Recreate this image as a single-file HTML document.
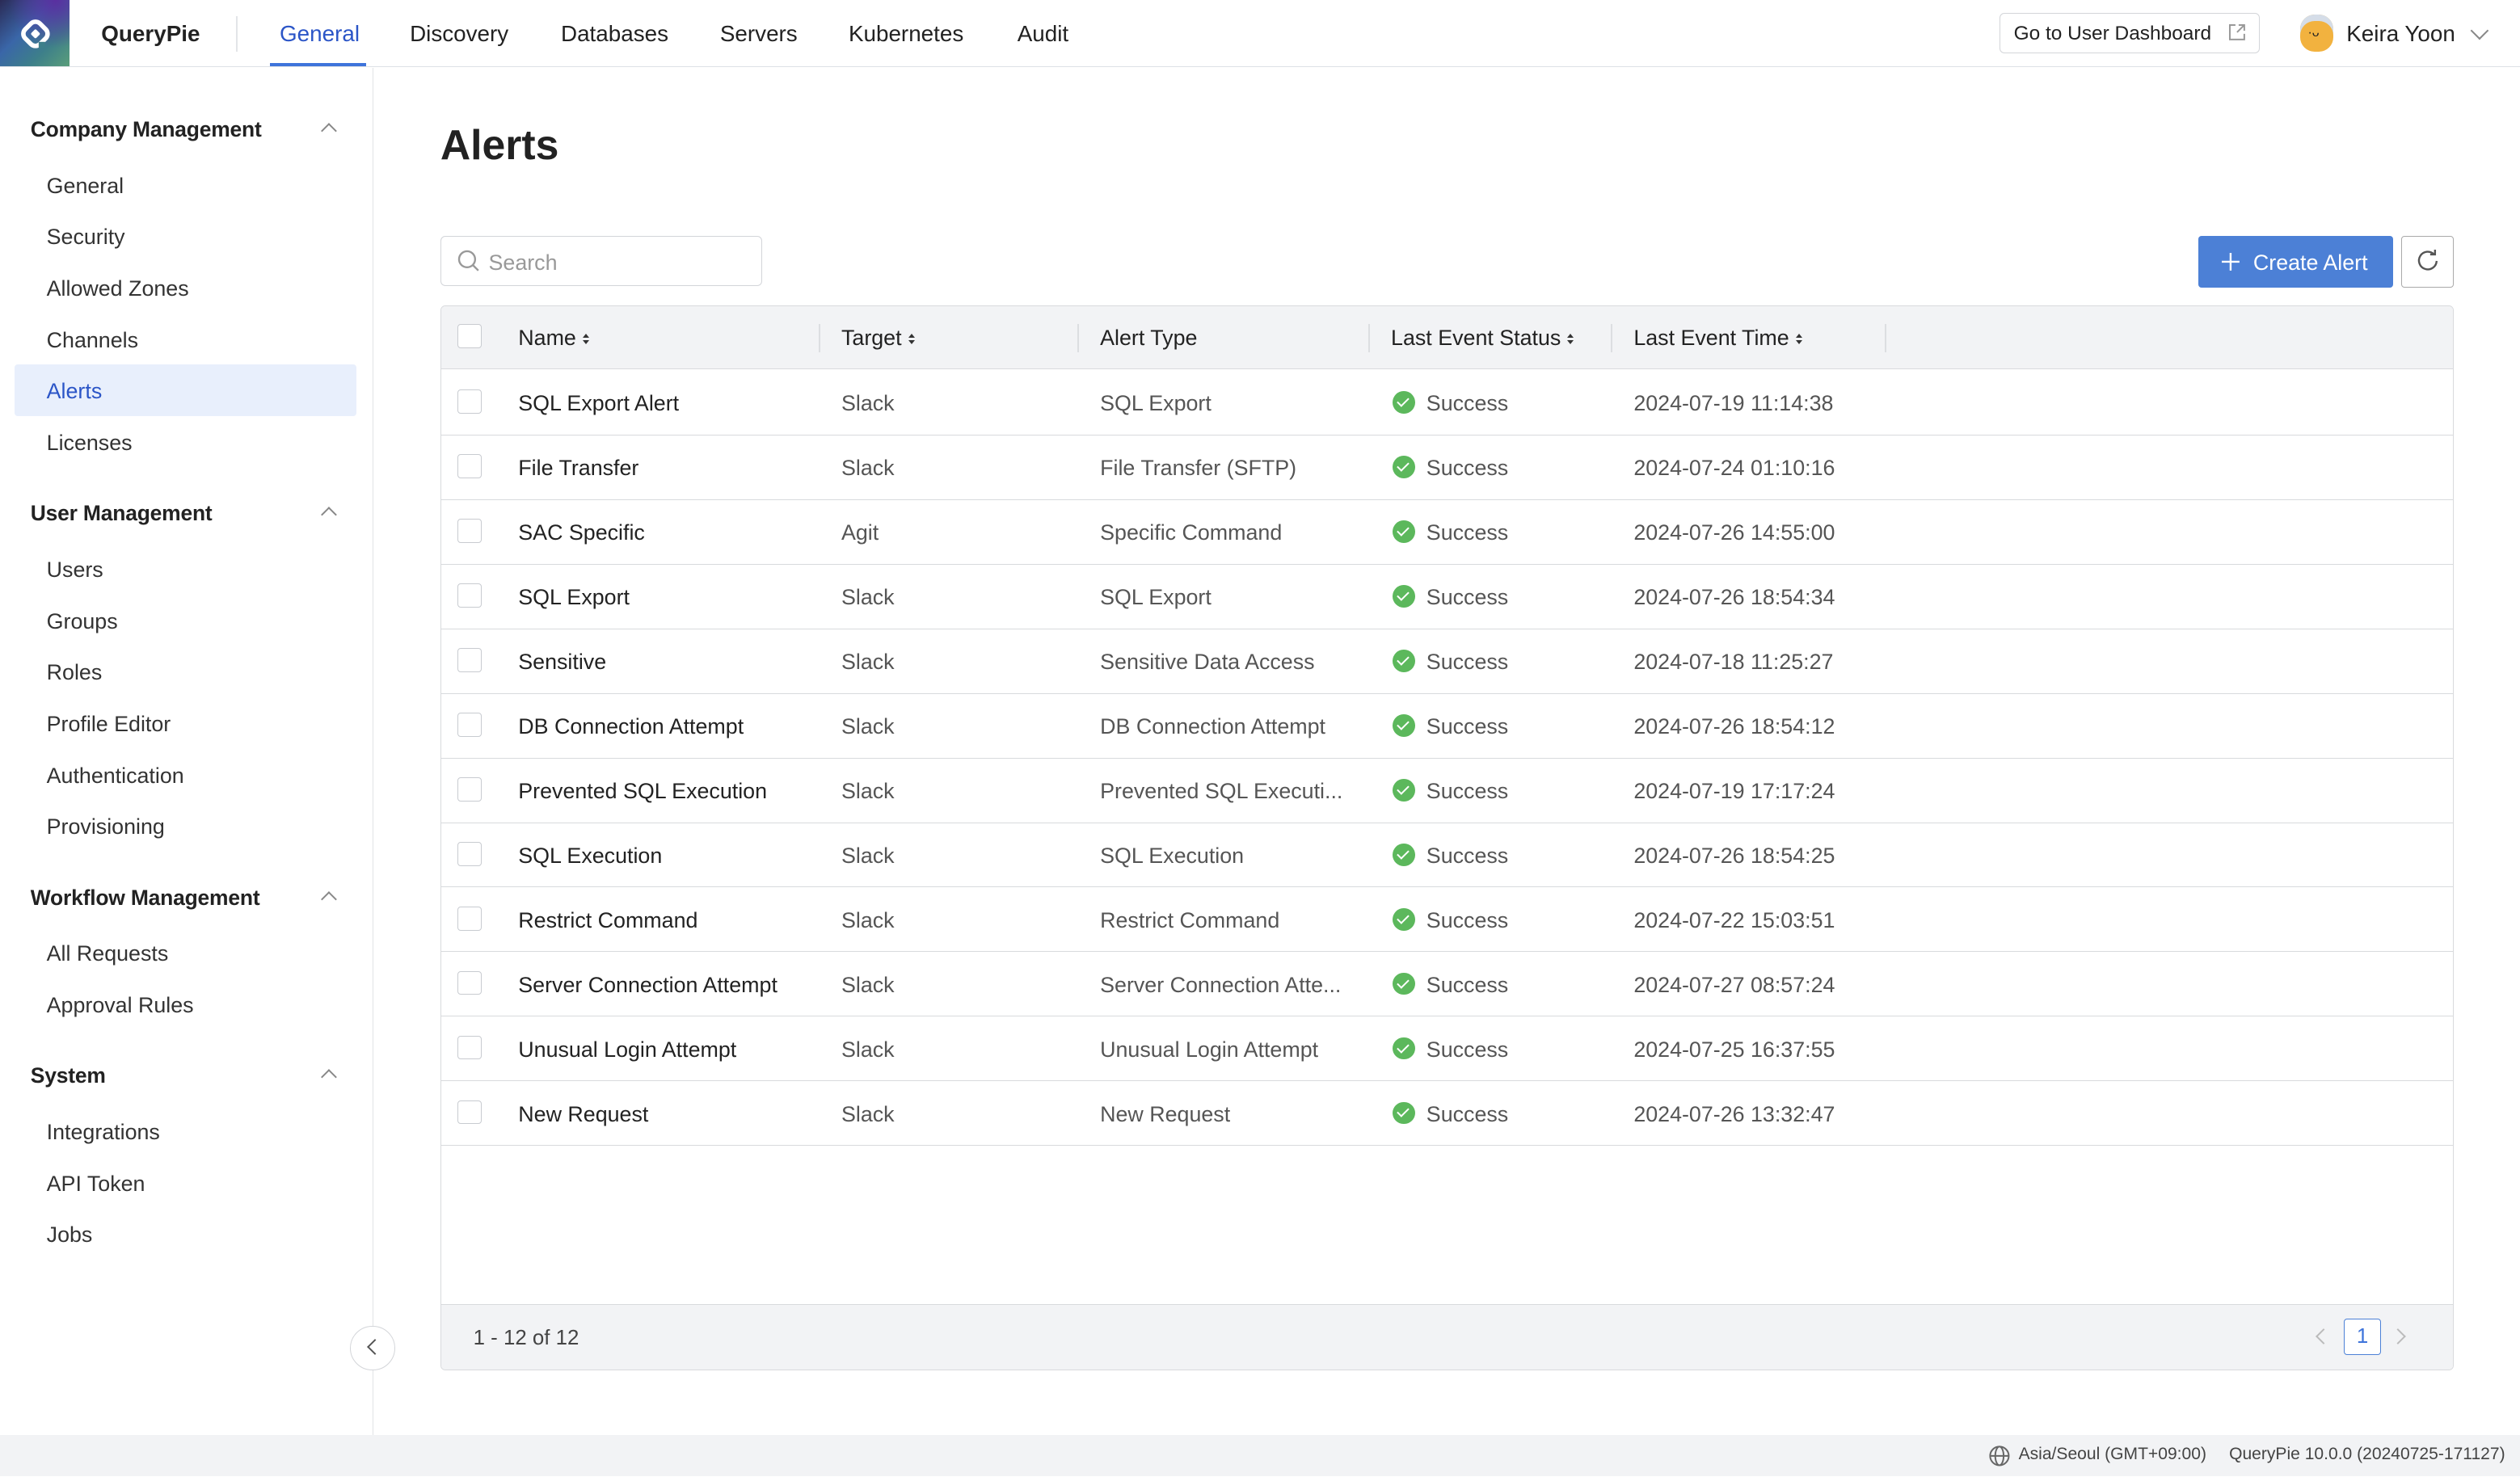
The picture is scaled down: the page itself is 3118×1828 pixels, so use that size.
<!DOCTYPE html>
<html><head><meta charset="utf-8">
<style>
html{zoom:1.98852}
body{margin:0;width:1568px;height:919px;position:relative;overflow:hidden;font-family:"Liberation Sans",sans-serif;color:#222;background:#fff}
.a{position:absolute;white-space:nowrap}
.hdr{position:absolute;left:0;top:0;width:1568px;height:41px;border-bottom:1px solid #dde1e6;background:#fff}
.nav{top:13px;font-size:14px;color:#222}
.side{position:absolute;left:0;top:42px;width:232px;height:851px;border-right:1px solid #e1e3e6}
.sh{font-size:13.3px;font-weight:bold;left:19px;color:#222;letter-spacing:-0.1px}
.si{font-size:13.5px;left:29px;color:#333}
.car{left:201px;width:6px;height:6px;border-left:1.2px solid #888;border-top:1.2px solid #888;transform:rotate(45deg)}
.tbl{position:absolute;left:274px;top:190px;width:1252px;height:662px;border:1px solid #d8dadd;border-radius:3px;overflow:hidden}
.row{position:absolute;left:0;width:1252px;height:40px;border-bottom:1px solid #d8dadd;font-size:13.5px}
.row span{position:absolute;top:13px;white-space:nowrap}
.row span.srt{position:static}
.cb{position:absolute;left:10px;top:12px;width:14px;height:14px;border:1px solid #c8cbd0;border-radius:2px;background:#fff}
.g{color:#555}
.ok{position:absolute;left:592px;top:13px;width:14px;height:14px;border-radius:50%;background:#5cb85c}
.ok:after{content:"";position:absolute;left:4.5px;top:2.5px;width:3px;height:6px;border-right:1.5px solid #fff;border-bottom:1.5px solid #fff;transform:rotate(45deg)}
.srt{display:inline-flex;flex-direction:column;margin-left:4px;vertical-align:middle;gap:1.5px}
.srt i{display:block;width:0;height:0;border-left:2.5px solid transparent;border-right:2.5px solid transparent}
.srt i.u{border-bottom:3px solid #333}
.srt i.d{border-top:3px solid #333}
.dv{position:absolute;top:11px;width:1px;height:18px;background:#dcdee1}
</style></head><body>
<div class="hdr"></div>
<div class="a" style="left:0;top:0;width:43px;height:41px;background:linear-gradient(135deg,#2a2a55 0%,#3a66a8 40%,#3d7f8a 70%,#5a9e7a 100%)"></div>
<div class="a" style="left:0;top:0;width:43px;height:41px;background:radial-gradient(circle at 80% 0%,#5a2fa0 0,rgba(90,47,160,0) 55%)"></div>
<svg class="a" style="left:11px;top:10px" width="22" height="22" viewBox="0 0 22 22"><rect x="4.5" y="4.5" width="13" height="13" rx="4" transform="rotate(45 11 11)" fill="none" stroke="#fff" stroke-width="2.8"/><rect x="8.8" y="8.8" width="4.4" height="4.4" rx="1" transform="rotate(45 11 11)" fill="#fff"/><rect x="13" y="16" width="4" height="4" fill="#3d7f8a"/></svg>
<div class="a" style="left:63px;top:13px;font-size:14px;font-weight:bold">QueryPie</div>
<div class="a" style="left:147px;top:10px;width:1px;height:22px;background:#e3e5e8"></div>
<div class="a nav" style="left:174px;color:#2b55c7">General</div>
<div class="a" style="left:168px;top:39px;width:60px;height:2px;background:#3e74db"></div>
<div class="a nav" style="left:255px">Discovery</div>
<div class="a nav" style="left:349px">Databases</div>
<div class="a nav" style="left:448px">Servers</div>
<div class="a nav" style="left:528px">Kubernetes</div>
<div class="a nav" style="left:633px">Audit</div>
<div class="a" style="left:1244px;top:8px;width:161px;height:24px;border:1px solid #d3d5d9;border-radius:3px"></div>
<div class="a" style="left:1253px;top:14px;font-size:12.3px">Go to User Dashboard</div>
<svg class="a" style="left:1386px;top:14px" width="12" height="12" viewBox="0 0 12 12"><path d="M5 1.5H1.5V10.5H10.5V7M7 1.5H10.5V5M10.5 1.5L6 6" fill="none" stroke="#999" stroke-width="1"/></svg>
<div class="a" style="left:1431px;top:9px;width:21px;height:23px;border-radius:9px;background:#f2b23f;box-shadow:inset 0 4px 0 #d5dde8"></div>
<div class="a" style="left:1436px;top:16px;font-size:8px;color:#222">·ᴗ</div>
<div class="a" style="left:1460px;top:13px;font-size:14px">Keira Yoon</div>
<div class="a" style="left:1539px;top:15px;width:7px;height:7px;border-right:1.2px solid #888;border-bottom:1.2px solid #888;transform:rotate(45deg)"></div>

<div class="side"></div>
<div class="a sh" style="top:73px">Company Management</div><div class="a car" style="top:78px"></div>
<div class="a" style="left:9px;top:227px;width:213px;height:32px;background:#e8effc;border-radius:2px"></div>
<div class="a si" style="top:108px">General</div>
<div class="a si" style="top:140px">Security</div>
<div class="a si" style="top:172px">Allowed Zones</div>
<div class="a si" style="top:204px">Channels</div>
<div class="a si" style="top:236px;color:#2b55c7">Alerts</div>
<div class="a si" style="top:268px">Licenses</div>
<div class="a sh" style="top:312px">User Management</div><div class="a car" style="top:317px"></div>
<div class="a si" style="top:347px">Users</div>
<div class="a si" style="top:379px">Groups</div>
<div class="a si" style="top:411px">Roles</div>
<div class="a si" style="top:443px">Profile Editor</div>
<div class="a si" style="top:475px">Authentication</div>
<div class="a si" style="top:507px">Provisioning</div>
<div class="a sh" style="top:551px">Workflow Management</div><div class="a car" style="top:556px"></div>
<div class="a si" style="top:586px">All Requests</div>
<div class="a si" style="top:618px">Approval Rules</div>
<div class="a sh" style="top:662px">System</div><div class="a car" style="top:667px"></div>
<div class="a si" style="top:697px">Integrations</div>
<div class="a si" style="top:729px">API Token</div>
<div class="a si" style="top:761px">Jobs</div>
<div class="a" style="left:218px;top:825px;width:27px;height:27px;border:1px solid #d3d5d9;border-radius:50%;background:#fff"></div>
<div class="a" style="left:230px;top:835px;width:6px;height:6px;border-left:1.3px solid #555;border-bottom:1.3px solid #555;transform:rotate(45deg)"></div>

<div class="a" style="left:274px;top:75px;font-size:26px;font-weight:bold;color:#222">Alerts</div>
<div class="a" style="left:274px;top:147px;width:199px;height:30px;border:1px solid #d3d5d9;border-radius:3px"></div>
<svg class="a" style="left:284px;top:155px" width="15" height="15" viewBox="0 0 15 15"><circle cx="6.5" cy="6.5" r="5" fill="none" stroke="#999" stroke-width="1.2"/><path d="M10 10L13.5 13.5" stroke="#999" stroke-width="1.2"/></svg>
<div class="a" style="left:304px;top:156px;font-size:13.5px;color:#999">Search</div>
<div class="a" style="left:1368px;top:147px;width:121px;height:32px;background:#4c80d6;border-radius:2px"></div>
<svg class="a" style="left:1382px;top:157px" width="12" height="12" viewBox="0 0 12 12"><path d="M6 0.5V11.5M0.5 6H11.5" stroke="#fff" stroke-width="1.2"/></svg>
<div class="a" style="left:1402px;top:156px;font-size:13.5px;color:#fff">Create Alert</div>
<div class="a" style="left:1494px;top:147px;width:32px;height:31px;border:1px solid #aaa;border-radius:2px"></div>
<svg class="a" style="left:1502px;top:154px" width="17" height="17" viewBox="0 0 17 17"><path d="M12.5 4.5A5.5 5.5 0 1 0 14 8.5" fill="none" stroke="#555" stroke-width="1.2"/><path d="M10 4.5H13V1.5" fill="none" stroke="#555" stroke-width="1.2"/></svg>

<div class="tbl">
<div class="row" style="top:0;height:39px;background:#f2f3f5;font-size:13.5px">
<div class="cb" style="top:11px"></div>
<span style="left:48px;top:12px">Name<span class="srt"><i class="u"></i><i class="d"></i></span></span>
<div class="dv" style="left:235px"></div>
<span style="left:249px;top:12px">Target<span class="srt"><i class="u"></i><i class="d"></i></span></span>
<div class="dv" style="left:396px"></div>
<span style="left:410px;top:12px">Alert Type</span>
<div class="dv" style="left:577px"></div>
<span style="left:591px;top:12px">Last Event Status<span class="srt"><i class="u"></i><i class="d"></i></span></span>
<div class="dv" style="left:728px"></div>
<span style="left:742px;top:12px">Last Event Time<span class="srt"><i class="u"></i><i class="d"></i></span></span>
<div class="dv" style="left:898px"></div>
</div>
<div id="rows"></div>
<div class="a" style="left:0;top:621px;width:1252px;height:41px;background:#f2f3f5;border-top:1px solid #d8dadd"></div>
<div class="a" style="left:20px;top:635px;font-size:13px;color:#444">1 - 12 of 12</div>
<div class="a" style="left:1168px;top:638px;width:6px;height:6px;border-left:1.2px solid #bbb;border-bottom:1.2px solid #bbb;transform:rotate(45deg)"></div>
<div class="a" style="left:1184px;top:630px;width:22px;height:22px;border:1px solid #4c80d6;border-radius:2px;background:#fff;text-align:center;line-height:22px;font-size:13px;color:#3e74db">1</div>
<div class="a" style="left:1214px;top:638px;width:6px;height:6px;border-right:1.2px solid #bbb;border-top:1.2px solid #bbb;transform:rotate(45deg)"></div>
</div>

<div class="a" style="left:0;top:893px;width:1568px;height:26px;background:#f2f3f5"></div>
<svg class="a" style="left:1237px;top:899px" width="14" height="14" viewBox="0 0 14 14"><circle cx="7" cy="7" r="5.8" fill="none" stroke="#666" stroke-width="1"/><ellipse cx="7" cy="7" rx="2.6" ry="5.8" fill="none" stroke="#666" stroke-width="1"/><path d="M1.2 7H12.8" stroke="#666" stroke-width="1"/></svg>
<div class="a" style="left:1256px;top:899px;font-size:10.6px;color:#444">Asia/Seoul (GMT+09:00)</div>
<div class="a" style="left:1387px;top:899px;font-size:10.6px;color:#444">QueryPie 10.0.0 (20240725-171127)</div>

<script>
var d=[["SQL Export Alert","Slack","SQL Export","2024-07-19 11:14:38"],["File Transfer","Slack","File Transfer (SFTP)","2024-07-24 01:10:16"],["SAC Specific","Agit","Specific Command","2024-07-26 14:55:00"],["SQL Export","Slack","SQL Export","2024-07-26 18:54:34"],["Sensitive","Slack","Sensitive Data Access","2024-07-18 11:25:27"],["DB Connection Attempt","Slack","DB Connection Attempt","2024-07-26 18:54:12"],["Prevented SQL Execution","Slack","Prevented SQL Executi...","2024-07-19 17:17:24"],["SQL Execution","Slack","SQL Execution","2024-07-26 18:54:25"],["Restrict Command","Slack","Restrict Command","2024-07-22 15:03:51"],["Server Connection Attempt","Slack","Server Connection Atte...","2024-07-27 08:57:24"],["Unusual Login Attempt","Slack","Unusual Login Attempt","2024-07-25 16:37:55"],["New Request","Slack","New Request","2024-07-26 13:32:47"]];
var h="";d.forEach(function(r,i){h+='<div class="row" style="top:'+(40+i*40.2)+'px"><div class="cb"></div><span style="left:48px">'+r[0]+'</span><span class="g" style="left:249px">'+r[1]+'</span><span class="g" style="left:410px">'+r[2]+'</span><div class="ok"></div><span class="g" style="left:613px">Success</span><span class="g" style="left:742px">'+r[3]+'</span></div>';});
document.getElementById("rows").innerHTML=h;
</script>
</body></html>
